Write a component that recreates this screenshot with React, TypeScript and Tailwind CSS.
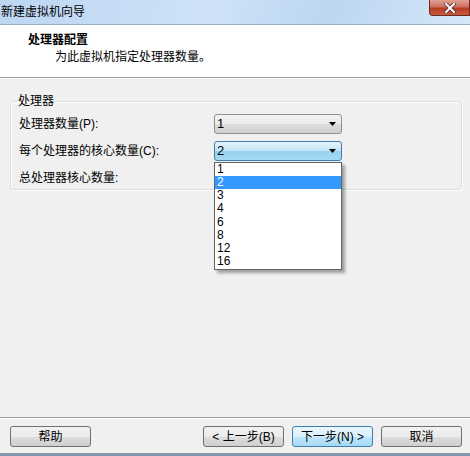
import React from "react";

const FONT = '"Liberation Sans", "Noto Sans CJK SC", sans-serif';

function Arrow() {
  return (
    <svg width="7" height="4" viewBox="0 0 7 4" className="block">
      <path d="M0 0 H7 L3.5 4 Z" fill="#000" />
    </svg>
  );
}

function Combo({ value, focused }: { value: string; focused?: boolean }) {
  return (
    <div
      className={
        "w-[128px] h-[20px] rounded-[3px] border flex items-center justify-between pl-[2px] pr-[5px] text-[13px] text-black " +
        (focused
          ? "border-[#3c7fb1] bg-[linear-gradient(to_bottom,#e5f4fc_0%,#c4e5f6_50%,#98d1ef_51%,#a6d9f4_100%)]"
          : "border-[#8e8f8f] bg-[linear-gradient(to_bottom,#f2f2f2_0%,#ebebeb_50%,#dddddd_51%,#cfcfcf_100%)]")
      }
    >
      <span className="leading-none">{value}</span>
      <Arrow />
    </div>
  );
}

function Btn({ label, def }: { label: string; def?: boolean }) {
  return (
    <div
      className={
        "w-[81px] h-[21px] rounded-[3px] border flex items-center justify-center text-[12px] text-black " +
        (def
          ? "border-[#3c7fb1] bg-[linear-gradient(to_bottom,#eaf6fd_0%,#d9f0fc_50%,#bee6fd_51%,#a7d9f5_100%)]"
          : "border-[#707070] bg-[linear-gradient(to_bottom,#f2f2f2_0%,#ebebeb_50%,#dddddd_51%,#cfcfcf_100%)]")
      }
    >
      {label}
    </div>
  );
}

export default function App() {
  const items = ["1", "2", "3", "4", "6", "8", "12", "16"];
  return (
    <div
      className="w-[470px] h-[456px] flex flex-col bg-[#f0f0f0] overflow-hidden"
      style={{ fontFamily: FONT }}
    >
      {/* title bar */}
      <div className="h-[25px] shrink-0 flex items-start justify-between border-b border-[#9fb0c6] bg-[linear-gradient(100deg,#bcd6f2_0%,#cfe2f7_45%,#bcd6f2_70%,#d6e7f8_100%)]">
        <div className="text-[12px] text-black leading-none pt-[6px] pl-[1px]">新建虚拟机向导</div>
        <div className="w-[41px] h-[16px] rounded-bl-[4px] border border-t-0 border-[#6d2a22] bg-[linear-gradient(to_bottom,#e0a191_0%,#cf7060_45%,#b73b25_55%,#c85a3e_100%)] flex items-center justify-center">
          <svg width="12" height="10" viewBox="0 0 12 10">
            <path d="M2 1 L10 9 M10 1 L2 9" stroke="#4a2a2a" strokeWidth="3.4" strokeLinecap="square" />
            <path d="M2 1 L10 9 M10 1 L2 9" stroke="#ffffff" strokeWidth="2" strokeLinecap="square" />
          </svg>
        </div>
      </div>

      {/* header */}
      <div className="h-[53px] shrink-0 bg-white border-b border-[#a0a0a0] flex flex-col pt-[7px]">
        <div className="pl-[28px] text-[12px] font-bold text-black leading-[16px]">处理器配置</div>
        <div className="pl-[55px] mt-[1px] text-[12px] text-black leading-[16px]">为此虚拟机指定处理器数量。</div>
      </div>

      {/* body */}
      <div className="flex-1 border-t border-white px-[10px] pt-[15px]">
        <fieldset className="border border-[#d5dfe5] rounded-[3px] h-[96px] mr-[-2px] px-[8px] shadow-[inset_1px_1px_0_#fff,1px_1px_0_#fff]">
          <legend className="ml-[-1px] px-0 text-[12px] text-black leading-[14px]">处理器</legend>
          <div className="flex flex-col pt-[2px]">
            <div className="h-[27px] flex items-center justify-between">
              <span className="text-[12px] text-black">处理器数量(P):</span>
              <div className="mr-[111px]">
                <Combo value="1" />
              </div>
            </div>
            <div className="h-[27px] flex items-center justify-between">
              <span className="text-[12px] text-black">每个处理器的核心数量(C):</span>
              <div className="mr-[111px] relative">
                <Combo value="2" focused />
                <div className="absolute left-0 top-[21px] w-[128px] bg-white border border-[#646464] z-10 shadow-[3px_3px_3px_rgba(0,0,0,0.35)]">
                  {items.map((it) => (
                    <div
                      key={it}
                      className={
                        "h-[13.25px] overflow-hidden leading-[13px] pl-[2px] text-[12px] " +
                        (it === "2" ? "bg-[#3399ff] text-white" : "text-black")
                      }
                    >
                      {it}
                    </div>
                  ))}
                </div>
              </div>
            </div>
            <div className="h-[27px] flex items-center">
              <span className="text-[12px] text-black">总处理器核心数量:</span>
            </div>
          </div>
        </fieldset>
      </div>

      {/* footer */}
      <div className="h-[36px] shrink-0 border-t border-[#a0a0a0] shadow-[inset_0_1px_0_#fff] flex items-start pt-[8px] pl-[10px]">
        <Btn label="帮助" />
        <div className="flex gap-[8px] ml-[112px]">
          <Btn label="< 上一步(B)" />
          <Btn label="下一步(N) >" def />
          <Btn label="取消" />
        </div>
      </div>
      <div className="h-[3px] shrink-0 bg-[#8595ab]" />
    </div>
  );
}
